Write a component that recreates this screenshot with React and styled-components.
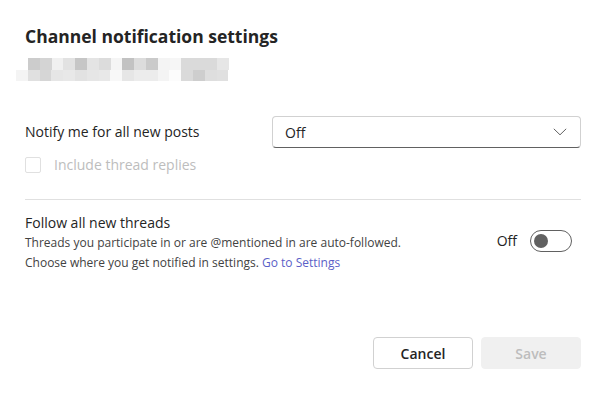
import React from 'react'
import styled, { createGlobalStyle } from 'styled-components'

const GlobalStyle = createGlobalStyle`
  body {
    margin: 0;
    background: #ffffff;
    font-family: "Segoe UI", "Open Sans", "Noto Sans", sans-serif;
    color: #242424;
  }
`

const Dialog = styled.div`
  width: 611px;
  height: 394px;
  box-sizing: border-box;
  padding: 23px 30px 0 25px;
  display: flex;
  flex-direction: column;
`

const Title = styled.h1`
  margin: 0;
  font-size: 17.5px;
  font-weight: 700;
  line-height: 26px;
  color: #242424;
`

// redacted channel name, drawn as mosaic blocks
const Mosaic = styled.div`
  margin: 9px 0 0 -9px;
  display: flex;
  flex-direction: column;
`
const MosaicRow = styled.div`
  display: flex;
  padding-left: ${(p) => p.$indent}px;
`
const Block = styled.div`
  width: 11.8px;
  height: 11.5px;
  background: ${(p) => p.$c};
`

const NotifyRow = styled.div`
  margin-top: 35px;
  display: grid;
  grid-template-columns: 247px 1fr;
  align-items: center;
`

const Label = styled.span`
  font-size: 14px;
  line-height: 20px;
  color: ${(p) => (p.$disabled ? '#bdbdbd' : '#242424')};
`

const Select = styled.div`
  height: 32px;
  box-sizing: border-box;
  border: 1px solid #d1d1d1;
  border-bottom-color: #616161;
  border-radius: 4px;
  padding: 0 13px 0 12px;
  display: flex;
  align-items: center;
  justify-content: space-between;
  font-size: 14px;
`

const CheckRow = styled.label`
  margin-top: 7px;
  display: flex;
  align-items: center;
  gap: 13px;
`

const Checkbox = styled.span`
  width: 16px;
  height: 16px;
  box-sizing: border-box;
  border: 1px solid #e0e0e0;
  border-radius: 2px;
`

const Divider = styled.hr`
  margin: 24px 0 0;
  border: 0;
  border-top: 1px solid #e0e0e0;
`

const FollowRow = styled.div`
  margin-top: 13px;
  display: flex;
  align-items: center;
  justify-content: space-between;
`

const FollowText = styled.div`
  display: flex;
  flex-direction: column;
`

const Hint = styled.span`
  font-size: 12px;
  line-height: 20px;
  color: #424242;
`

const Link = styled.a`
  color: #5b5fc7;
  text-decoration: none;
`

const SwitchWrap = styled.div`
  display: flex;
  align-items: center;
  gap: 13px;
  margin: 0 9px 5px 0;
`

const Track = styled.span`
  width: 42px;
  height: 22px;
  box-sizing: border-box;
  border: 1px solid #616161;
  border-radius: 11px;
  display: flex;
  align-items: center;
  padding-left: 3px;
`

const Knob = styled.span`
  width: 14px;
  height: 14px;
  border-radius: 50%;
  background: #616161;
`

const Footer = styled.div`
  margin-top: auto;
  margin-bottom: 25px;
  display: flex;
  justify-content: flex-end;
  gap: 8px;
`

const Button = styled.button`
  width: 100px;
  height: 32px;
  box-sizing: border-box;
  border-radius: 4px;
  font-family: inherit;
  font-size: 14px;
  font-weight: 600;
  border: 1px solid ${(p) => (p.$disabled ? '#f0f0f0' : '#d1d1d1')};
  background: ${(p) => (p.$disabled ? '#f0f0f0' : '#ffffff')};
  color: ${(p) => (p.$disabled ? '#bdbdbd' : '#242424')};
`

const row1 = ['#cccccc', '#d4d4d4', '#f0f0f0', '#e2e2e2', '#c6c6c6', '#e4e4e4', '#dcdcdc', '#f5f5f5', '#c2c2c2', '#dcdcdc', '#cacaca', '#f4f4f4', '#f6f6f6', '#dadada', '#dadada', '#dadada', '#e6e6e6']
const row2 = ['#f4f4f4', '#e0e0e0', '#d6d6d6', '#e6e6e6', '#e8e8e8', '#e2e2e2', '#e6e6e6', '#e8e8e8', '#f8f8f8', '#e6e6e6', '#ececec', '#ececec', '#f4f4f4', '#fcfcfc', '#dadada', '#cecece', '#dedede', '#e0e0e0']

function Chevron() {
  return (
    <svg width="14" height="8" viewBox="0 0 14 8" fill="none">
      <path d="M0.8 0.8 L7 6.8 L13.2 0.8" stroke="#616161" strokeWidth="1" />
    </svg>
  )
}

export default function App() {
  return (
    <>
      <GlobalStyle />
      <Dialog>
        <Title>Channel notification settings</Title>
        <Mosaic>
          <MosaicRow $indent={12}>
            {row1.map((c, i) => <Block key={i} $c={c} />)}
          </MosaicRow>
          <MosaicRow $indent={0}>
            {row2.map((c, i) => <Block key={i} $c={c} />)}
          </MosaicRow>
        </Mosaic>

        <NotifyRow>
          <Label>Notify me for all new posts</Label>
          <Select>
            <span>Off</span>
            <Chevron />
          </Select>
        </NotifyRow>
        <CheckRow>
          <Checkbox />
          <Label $disabled>Include thread replies</Label>
        </CheckRow>

        <Divider />

        <FollowRow>
          <FollowText>
            <Label>Follow all new threads</Label>
            <Hint>Threads you participate in or are @mentioned in are auto-followed.</Hint>
            <Hint>
              Choose where you get notified in settings. <Link href="#">Go to Settings</Link>
            </Hint>
          </FollowText>
          <SwitchWrap>
            <Label>Off</Label>
            <Track>
              <Knob />
            </Track>
          </SwitchWrap>
        </FollowRow>

        <Footer>
          <Button>Cancel</Button>
          <Button $disabled>Save</Button>
        </Footer>
      </Dialog>
    </>
  )
}
